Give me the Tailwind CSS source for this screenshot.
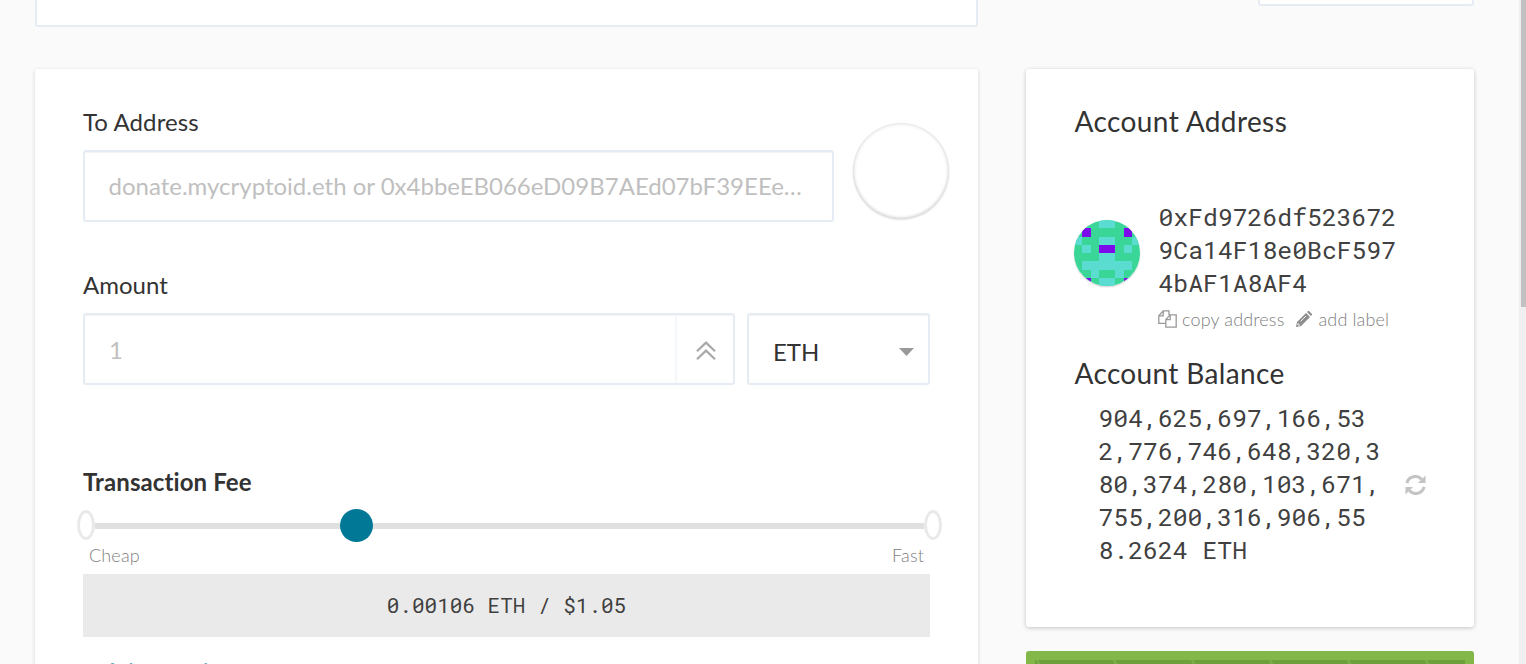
<!DOCTYPE html>
<html lang="en">
<head>
<meta charset="utf-8">
<title>Send Ether</title>
<script src="https://cdn.jsdelivr.net/npm/@tailwindcss/browser@4"></script>
</head>
<body class="flex h-[664px] overflow-hidden bg-[#fafafa] font-[Lato,sans-serif] text-[#333]">
<div class="flex h-[664px] w-[1519px] shrink-0 items-start gap-12 overflow-hidden pl-[35px]">
  <main class="w-[943px] shrink-0">
    <div class="h-[27px] rounded-b-[3px] border-2 border-t-0 border-[#e5ecf3] bg-white"></div>
    <section class="mt-[42px] h-[640px] rounded-[3px] bg-white px-12 pt-[38px] shadow-[0_1px_4px_rgba(0,0,0,0.14)]">
      <div class="flex">
        <div class="w-[751px]">
          <div class="h-[43px] text-[24px] leading-[30px] tracking-[0.1px]">To Address</div>
          <div class="flex h-[72px] items-center rounded-[3px] border-2 border-[#e5ecf3] pl-[23.5px] text-[24px] text-[#bfbfbf] shadow-[inset_0_1px_1px_rgba(0,0,0,0.05)]"><span class="whitespace-nowrap">donate.mycryptoid.eth or 0x4bbeEB066eD09B7AEd07bF39EEe…</span></div>
        </div>
        <div class="-mr-5 mt-[16px] ml-[19px] size-24 shrink-0 rounded-full shadow-[inset_0_0_4px_rgba(0,0,0,0.16),inset_0_-1px_3px_rgba(0,0,0,0.1),0_1px_2px_rgba(0,0,0,0.12)]"></div>
      </div>
      <div class="mt-[48px] h-[43px] text-[24px] leading-[30px]">Amount</div>
      <div class="flex gap-3">
        <div class="flex h-[72px] w-[652px] rounded-[3px] border-2 border-[#e5ecf3] text-[24px] text-[#bfbfbf] shadow-[inset_0_1px_1px_rgba(0,0,0,0.05)]">
          <div class="flex w-[592px] items-center border-r-2 border-[#f5f8fb] pt-0.5 pl-[24px]">1</div>
          <div class="flex flex-1 items-center justify-center pl-px pt-[3px]">
            <svg width="20" height="20" viewBox="0 0 20 20" fill="none" stroke="#a9a9a9" stroke-width="2.2"><path d="M1 10.2 10 1.6 19 10.2M1 18.2 10 9.6 19 18.2"/></svg>
          </div>
        </div>
        <div class="flex h-[72px] w-[183px] items-center justify-between rounded-[3px] border-2 border-[#e5ecf3] pl-[24px] pr-[14px] pt-1.5 text-[24px] shadow-[inset_0_1px_1px_rgba(0,0,0,0.05)]">
          <span>ETH</span>
          <svg width="15" height="8" viewBox="0 0 15 8" fill="#999"><path d="M0 0H15L7.5 8Z"/></svg>
        </div>
      </div>
      <div class="mt-[82px] text-[24px] leading-[30px] font-bold tracking-[0.1px]">Transaction Fee</div>
      <div class="relative -mr-3 -ml-1.5 mt-3 flex h-[33px] items-center">
        <div class="h-[30px] w-[18px] -translate-y-px rounded-[50%] border-3 border-[#e9e9e9] bg-white"></div>
        <div class="h-1.5 flex-1 bg-[#e0e0e0]"></div>
        <div class="h-[30px] w-[18px] -translate-y-px rounded-[50%] border-3 border-[#e9e9e9] bg-white"></div>
        <div class="absolute top-[0.4px] left-[262.5px] size-[33px] rounded-full bg-[#007896]"></div>
      </div>
      <div class="flex h-[32px] items-start justify-between px-1.5 text-[18px] leading-[27px] font-light tracking-[0.15px] text-[#808080]"><span>Cheap</span><span>Fast</span></div>
      <div class="flex h-[63px] items-center justify-center bg-[#eaeaea] font-['Roboto_Mono','Liberation_Mono',monospace] text-[21px] text-[#404040]">0.00106 ETH / $1.05</div>
      <div class="mt-[19px] pl-0.5 text-[24px] leading-[30px] text-[#007896]/60">+ Advanced</div>
    </section>
  </main>
  <aside class="w-[448px] shrink-0">
    <div class="ml-[232px] h-[6px] rounded-b-[3px] border-2 border-t-0 border-[#e5ecf3] bg-white"></div>
    <section class="mt-[63px] h-[558px] rounded-[3px] bg-white px-12 pt-[35px] shadow-[0_1px_4px_rgba(0,0,0,0.22)]">
      <h2 class="pl-[0.5px] text-[28px] leading-[34px] tracking-[0.4px]">Account Address</h2>
      <div class="mt-[62px] flex h-[132px] items-start">
        <svg class="mt-[20px] mr-[18px] size-[66px] shrink-0 rounded-full shadow-[0_1px_2px_rgba(0,0,0,0.2)]" viewBox="0 0 8 8" shape-rendering="crispEdges">
          <path fill="#39d698" d="M0 0h8v8H0z"/>
          <path fill="#5addd0" d="M3 0h2v1H3zM0 2h1v1H0zM7 2h1v1H7zM3 2h2v1H3zM1 3h1v1H1zM6 3h1v1H6zM3 4h2v1H3zM1 5h6v1H1zM2 6h1v1H2zM5 6h1v1H5zM3 7h2v1H3z"/>
          <path fill="#7c0aea" d="M1 1h1v1H1zM6 1h1v1H6zM3 3h2v1H3zM1 7h1v1H1zM6 7h1v1H6z"/>
        </svg>
        <div class="w-[260px] shrink-0">
          <div class="pl-[0.5px] font-['Roboto_Mono','Liberation_Mono',monospace] text-[24.75px] leading-[33px] text-[#404040]">0xFd9726df523672<br>9Ca14F18e0BcF597<br>4bAF1A8AF4</div>
          <div class="mt-[5px] flex h-[30px] items-center text-[18px] font-light tracking-[0.15px] text-[#808080]">
            <svg class="mr-[5px]" width="19" height="18" viewBox="0 0 19 18" fill="none" stroke="#999" stroke-width="1.3"><path d="M7 13.3H.8V5.8L5.2.8H11V5M.8 5.8H5.2V.8M7.8 17.2V9.6L12.2 4.9H18.2V17.2ZM7.8 9.6H12.2V4.9"/></svg>
            <span>copy address</span>
            <svg class="ml-[12px] mr-[6px]" width="16" height="16" viewBox="0 0 16 16"><path fill="#8c8c8c" d="M0 16 1 11 10 2l4 4-9 9zM11 1l1-1h1l3 3v1l-1 1z"/><path d="M2 12v2h2M4.5 10.5 10 5" fill="none" stroke="#fff" stroke-width=".9"/></svg>
            <span>add label</span>
          </div>
        </div>
      </div>
      <h2 class="mt-[24px] pl-[0.5px] text-[28px] leading-[34px] tracking-[0.35px]">Account Balance</h2>
      <div class="mt-[11px] flex items-center pl-6">
        <div class="w-[307px] shrink-0 pl-[0.5px] font-['Roboto_Mono','Liberation_Mono',monospace] text-[24.75px] leading-[33px] text-[#404040]">904,625,697,166,53<br>2,776,746,648,320,3<br>80,374,280,103,671,<br>755,200,316,906,55<br>8.2624 ETH</div>
        <svg class="mt-0.5 shrink-0" width="21" height="22" viewBox="0 0 22 22" fill="none" stroke="#c4c4c4" stroke-width="3.2"><path d="M2 9A9 9 0 0 1 17.5 5.2M20 13A9 9 0 0 1 4.5 16.8"/><path fill="#c4c4c4" stroke="none" d="M21.5 1V9H13.5ZM.5 21V13H8.5Z"/></svg>
      </div>
    </section>
    <div class="mt-6 h-20 rounded-[3px] bg-[#83b74a] px-[9px] pt-[9px]">
      <svg class="block" width="430" height="40"><path fill="#6f9f3d" d="M0 0h430v40H0z"/><path stroke="#7cad47" stroke-width="2.5" d="M2 0l3 6M79 0l3 6M157 0l3 6M235 0l3 6M313 0l3 6M391 0l3 6"/></svg>
    </div>
  </aside>
</div>
<div class="h-full w-[7px] shrink-0 bg-[#f0f0f0] pl-0.5"><div class="h-[307px] bg-[#c1c1c1]"></div></div>
</body>
</html>
